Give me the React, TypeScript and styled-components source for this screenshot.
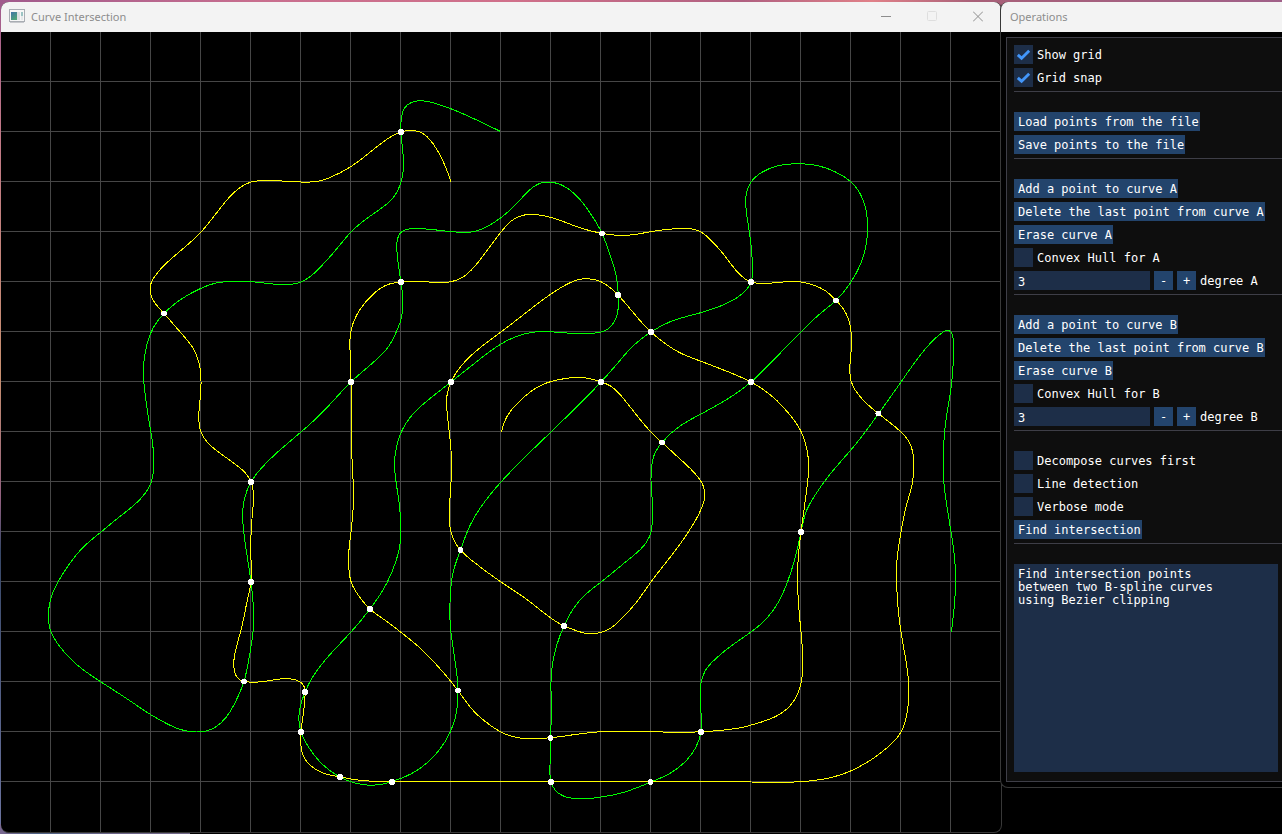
import React, { useState } from "react";
import styled, { createGlobalStyle, css } from "styled-components";

const GlobalStyle = createGlobalStyle`
  * { box-sizing: border-box; }
  html, body { margin: 0; padding: 0; background: #000; }
  body { overflow-x: hidden; }
`;

const colors = {
  titleBar: "#f3f3f3",
  titleText: "#8d8d8d",
  panel: "#0e0e0e",
  line: "#3e3e47",
  outline: "#383838",
  frame: "#1d2e48",
  button: "#23446c",
  accent: "#4296fa",
  grid: "#464646",
  curveA: "#ffff00",
  curveB: "#00ff00",
};

const Desktop = styled.main`
  display: flex;
  align-items: flex-start;
  min-height: 100vh;
  padding: 2px 0 1px 1px;
  background:
    linear-gradient(90deg, #a05a8c 0%, #c86e8e 20%, #d0708a 40%, #b06080 58%, #e08088 68%, #a86078 76%, #a06088 100%) top / 100% 12px no-repeat,
    linear-gradient(90deg, #7a6890, #4d6284 20%, #6c6488 60%, #716888) left bottom / 190px 10px no-repeat,
    linear-gradient(180deg, #a05a8c 0%, #c07888 15%, #c89070 45%, #906080 60%, #384868 66%, #6c74a0 100%) left / 12px 100% no-repeat,
    #000;
`;

const MainWindow = styled.section`
  flex: 1;
  min-width: 0;
  overflow: hidden;
  background: #000;
  border-right: 1px solid ${colors.outline};
  border-bottom: 1px solid ${colors.outline};
  border-radius: 8px;
`;

const ToolWindow = styled.aside`
  position: relative;
  flex: 0 0 282px;
  margin-left: -2px;
  overflow: hidden;
  background: #000;
  border-left: 1px solid ${colors.outline};
  border-bottom: 1px solid ${colors.outline};
  border-radius: 8px 0 0 8px;
`;

const TitleBar = styled.header<{ $plain?: boolean }>`
  display: flex;
  align-items: center;
  height: 30px;
  padding-left: ${(p) => (p.$plain ? "9px" : "8px")};
  background: ${colors.titleBar};
`;

const Title = styled.h1`
  margin: 0;
  flex: 1;
  font: 400 11px/16px "Noto Sans", "Open Sans", sans-serif;
  color: ${colors.titleText};
  white-space: nowrap;
`;

const AppIcon = styled.svg`
  display: block;
  flex: none;
  margin-right: 6px;
`;

const CaptionButton = styled.button`
  display: grid;
  place-items: center;
  width: 46px;
  height: 30px;
  padding: 0;
  border: 0;
  background: none;
  color: ${colors.titleText};
  &:disabled { color: #dedede; }
`;

const Canvas = styled.svg`
  display: block;
  width: 100%;
  height: auto;
`;

const Panel = styled.form`
  display: flex;
  flex-direction: column;
  margin: 5px 0 5px 5px;
  padding: 7px 0 9px 7px;
  background: ${colors.panel};
  border: 1px solid ${colors.line};
  border-right: 0;
`;

const panelText = css`
  font: 400 12px/13px "DejaVu Sans Mono", monospace;
  color: #fff;
`;

const Group = styled.div`
  display: flex;
  flex-direction: column;
  align-items: flex-start;
  gap: 4px;
`;

const Separator = styled.hr`
  width: 100%;
  height: 1px;
  margin: 4px 0 20px;
  border: 0;
  background: ${colors.line};
`;

const Button = styled.button<{ $square?: boolean }>`
  ${panelText}
  width: ${(p) => (p.$square ? "19px" : "auto")};
  height: 19px;
  padding: ${(p) => (p.$square ? "2px 0 0" : "2px 1px 0 4px")};
  border: 0;
  background: ${colors.button};
  white-space: nowrap;
  &:hover { background: ${colors.accent}; }
`;

const CheckLabel = styled.label`
  ${panelText}
  display: flex;
  align-items: center;
  gap: 4px;
`;

const LabelText = styled.span`
  padding-top: 2px;
`;

const CheckFrame = styled.span`
  display: grid;
  width: 19px;
  height: 19px;
  & > * { grid-area: 1 / 1; }
`;

const CheckInput = styled.input`
  appearance: none;
  width: 19px;
  height: 19px;
  margin: 0;
  background: ${colors.frame};
`;

const Row = styled.div`
  display: flex;
  align-items: center;
  gap: 4px;
`;

const DegreeInput = styled.input`
  ${panelText}
  width: 136px;
  height: 19px;
  padding: 2px 4px 0;
  border: 0;
  border-radius: 0;
  background: ${colors.frame};
`;

const DegreeLabel = styled.label`
  ${panelText}
  padding-top: 2px;
`;

const Output = styled.textarea`
  ${panelText}
  display: block;
  height: 208px;
  margin: 0 4px 0 0;
  padding: 4px;
  border: 0;
  resize: none;
  background: ${colors.frame};
`;

type Point = [number, number];

const parse = (s: string): Point[] =>
  s.trim().split(/\s+/).map((p) => p.split(",").map(Number) as Point);

/* Derivatives of the natural C2 cubic spline through v with knot spacing h. */
function derivatives(v: number[], h: number[]): number[] {
  const n = v.length;
  const c: number[] = [];
  const r: number[] = [];
  for (let i = 0; i < n; i++) {
    const a = i === 0 ? 0 : i === n - 1 ? 1 : h[i];
    const b = i === 0 || i === n - 1 ? 2 : 2 * (h[i - 1] + h[i]);
    const up = i === n - 1 ? 0 : i === 0 ? 1 : h[i - 1];
    let rhs: number;
    if (i === 0) rhs = (3 * (v[1] - v[0])) / h[0];
    else if (i === n - 1) rhs = (3 * (v[i] - v[i - 1])) / h[i - 1];
    else rhs = 3 * ((h[i] * (v[i] - v[i - 1])) / h[i - 1] + (h[i - 1] * (v[i + 1] - v[i])) / h[i]);
    const m = b - (i ? a * c[i - 1] : 0);
    c.push(up / m);
    r.push((rhs - (i ? a * r[i - 1] : 0)) / m);
  }
  for (let i = n - 2; i >= 0; i--) r[i] -= c[i] * r[i + 1];
  return r;
}

function spline(points: Point[]): string {
  const h = points.slice(1).map((p, i) => Math.hypot(p[0] - points[i][0], p[1] - points[i][1]));
  const dx = derivatives(points.map((p) => p[0]), h);
  const dy = derivatives(points.map((p) => p[1]), h);
  let d = `M${points[0][0]} ${points[0][1]}`;
  h.forEach((len, i) => {
    const k = len / 3;
    const [x0, y0] = points[i];
    const [x1, y1] = points[i + 1];
    const c = [x0 + dx[i] * k, y0 + dy[i] * k, x1 - dx[i + 1] * k, y1 - dy[i + 1] * k, x1, y1];
    d += `C${c.map((v) => v.toFixed(2)).join(" ")}`;
  });
  return d;
}

const curveA = parse(`
  451,181.5 444.3,164 433.5,144.3 420.3,132.2 410,130.6 401,132 383.5,141.7 351,166.5 330,177.5 318.5,181.2 301,182 282,181
  265,180.7 251,182 239.5,188 225,202.3 201,232 185,247 165,264.5 155,276 151,283.5 150,289 152.5,299 164,313.5 180,331.8
  192.3,347 198.8,362 200.7,374 200.5,395 199,411 199.3,425 201,432 207.5,442.5 222,454.6 237.3,465.8 247.3,475.3 251,482
  253.4,491.7 252.6,511.7 251,535 251,560 251,582 247.4,600 242,626 236.2,648 233.7,664 235.5,674.5 239.4,679.6 244,681.3
  264,681.4 280,679 290,678.8 297,680.4 301.5,683 304,686.5 305,692 303.4,713 301,732 301,746 304.3,758 310.3,765.3 321.8,772.5
  340,777 360,780.3 392,781.6 451,782 551,781.6 651,782 751,782 801,781.7 823,779.2 851,770.8 873,758.5 888.3,746.7
  901.3,731.5 906.7,715 908.6,700 908.6,682 905.8,660 901,632 897.8,605 896.6,582 896.8,562 901,532 906.8,504 912.6,482
  913.7,467 912.7,452 908.6,441 901,432 878.5,413.7 861.8,398.5 855.2,390 851,380.7 849.8,370 851.3,348 851,332 848.4,319
  842.5,307.7 836,300.4 825,290.5 811.8,284.5 798,281.5 786.7,281.7 770,283.2 758,283.2 751,282 740.8,275.5 730.2,263
  720,250 710.2,239.5 701,232 692,229 681.8,228.5 664,229.8 651,231.7 630,235 618,235.3 602,233.4 580,227.8 557,219.3
  545,216 530,214.4 520,216.2 511,221.2 501,232 486,252 475,266 462.5,277.3 451.5,281.6 425,281.7 401,282 386.7,285
  372.8,294.5 361,308 353,323.5 350.4,334 350,350 351,382 351.4,400 351.5,432 352.4,468 353.5,493 353,510 351,532 348.9,551
  349,570 351.2,582.3 357.5,594 370,609 385,620.2 401,632.3 420,648 438.5,667 458,690.6 473.5,710.8 491,725.8 501,732
  511.6,736.2 521.6,738.3 540,738.4 551,737.7 575,734.5 601,731.7 651,731.7 675,732.2 701,731.8 720,730.4 740,727.8
  759,722.8 775,716.8 790,705.8 797.8,693.5 801.2,682 802.7,670 802.5,650 801,632 798.4,602 797.5,577 798.7,552 801,532
  804.4,507 807.7,481 808.7,467 806.7,448.4 801.3,432 790,415 776.8,400.5 751,382 720,368.6 701,361.3 680,352.8 665,343.5
  651,332 636.8,316.8 618,295 610,287.5 600.5,281.5 588.3,278.8 579,279.5 567,284.2 551,294 527,311.9 501,332 480,347.8
  461.8,365.2 451,382 446.9,396 447.2,413 450.7,446 451.5,460 451,482 449.5,507 449.2,517 451,532 455.2,542.5 460.5,550
  473.5,561.8 501,582 530,601.8 564,626 575,630.2 586.6,633.5 597,633.3 610,628.5 620,620.3 635,604 651,582 678.5,546.3
  695,521.3 702.8,505 704.8,496.6 703,485.5 700.4,480.5 685,463.5 662,442.5 651,432 635.3,413.5 620.6,395.2 610.2,385.8
  601,382 590,378.7 575,377.5 560,379.4 545,383.5 531.8,390.8 516.2,404.5 506.8,416.8 501.3,432`);

const curveB = parse(`
  500.5,131.5 475,119.2 451,108.8 431.6,102.4 420,100.7 411,102.7 404.2,108.5 401.5,117 401,132 402.6,150 403.5,163
  403,172 401,182 398,190 391.8,199.3 378.5,210.3 363.5,221 351,232 342,242.5 320,267.5 310,276.7 301,282 290,284.4 275,284.2
  251,281.7 230,281.5 216,283 201,288.3 185,296.8 164,313.5 153.4,327.5 146.8,345 144,361 143.7,380 145.8,399 149.3,423
  152.7,444 153.7,460 153.3,472 151,483 145,493.5 135,504.3 119.5,516.8 101,532 83.5,547 68.5,565.2 57.5,582.8 50.2,601
  48.5,615 51,632 57.5,643.5 73.5,661.8 101,682 130,700.8 151,714.8 165,722.7 180,729.4 196,732 206,731 215,727.4
  226.4,717 235.2,702.5 244,681.3 250.6,649 253.5,627 253.3,605 251,582 246.2,550 243.5,530 242.6,514 244.5,498.5 251,482
  262.6,466.8 276.6,453 301.5,431.6 323.5,411.2 351,382 375,360.8 388.3,346.8 397.3,329.7 401.6,317 402.5,305 402.2,292
  401,282 399,269 396.8,247 397.5,239 400.4,232.8 406,229.6 412,228.7 425,228.9 451,231.6 462,232.3 475,231.4 486.6,226.8
  501,217.6 520,200 534.4,186.2 543,182.5 551,182.2 561,184.8 576.6,196 591.6,215.2 602,233.4 610.2,255.2 616.2,276
  618.3,295 617.5,313 614.2,321.8 607.8,329.2 598.3,332.6 585,333.4 570,333.2 551,331.8 535,332 520,335.2 501,344
  478.5,360.2 451,382 430,398.5 413.5,413.5 401.3,432 396.2,448.3 394.6,465 396.5,485 399.6,507 400.7,524 400.2,543
  395.2,563.3 386.7,583.3 370,609 351,632 325,660.2 313.3,676 305,692 300,708 298.9,716 301,732 308.4,746.8 318.5,760.2
  340,777 351,781.8 361.6,784.4 371,785.2 382,784.2 392,781.6 411.6,773.6 430,760.3 445,741.8 454.3,721.6 457.6,703
  458,690.6 454.5,657 451,632.5 449.8,616 450.2,598 452.8,573.5 460.5,550 470,525.5 483.4,503.5 501,482 523.5,458.5
  551,432 575,408.5 601,382 621.6,358.5 630,349 651,332 670,321.8 701,312.6 720,306.2 736.8,297.8 746.8,289.2 751,282
  752.5,266 751,245 747.5,220 745.8,205 746.5,193 751,182 761.8,172.4 778,165.8 797.3,163.8 820,166.2 835,171.8 851,182
  861.6,196.6 866.2,211 867.7,227 866.3,244 860,265.3 851,282 836,300.4 820,313.8 801,332 775,358.5 751,382 735,394.2
  720,403.5 701,414 680,426 662,442.5 653.4,457 651.6,467 651,480 652.2,500 652.4,518 651,532 645.6,543.5 630,558.4
  601,582 585,595 573.3,608.7 564,626 556.8,645 552.5,664 551,682 551.4,710 550.7,732 550.1,745 550,765 551,782 555.2,790
  562.6,795.7 572,798.2 590,798.5 601,797 620,793.4 651,782 670,773.4 686.6,760.2 695.2,748.5 701,732 700.8,710 701,683
  705.2,670.8 714,660.3 730,646.8 751,632 766.6,618.5 778.5,602 787.3,582.6 795.2,557.5 801,532 806.6,510.5 815,495.3
  824,482 843.5,458.4 853.5,446.8 865.2,432 878.5,413.7 901,382 920,355.5 935,338.6 942.3,332.6 948,330.5 951.4,332.5
  953,338 953.7,350 953.2,364 951,388 947.4,411 944.6,431.6 943.6,450 943.8,481 946.5,503.5 951,532 954.2,554 955.6,580
  954.5,604 952.6,621.6 951.5,632`);

const crossings = parse(`
  401,132 164,313.5 401,282 351,382 451,382 602,233.5 618,295 651,332 601,382 751,282 836,300.5 751,382 662,442.5
  878.5,413.5 251,482 251,582 244,681.5 305,692 301,732 340,777 392,782 370,609 460.5,550 564,626 458,690.5 550.5,738
  551,782 650.5,782 701,732 801,532`);

const columns = Array.from({ length: 19 }, (_, i) => 50.5 + i * 50);
const rows = Array.from({ length: 15 }, (_, i) => 81.5 + i * 50);

function CurveCanvas({ showGrid }: { showGrid: boolean }) {
  return (
    <Canvas viewBox="1 32 1000 800" role="img" aria-label="Curves" shapeRendering="crispEdges" fill="none">
      {showGrid && (
        <g stroke={colors.grid}>
          {columns.map((x) => <line key={x} x1={x} x2={x} y1="32" y2="832" />)}
          {rows.map((y) => <line key={y} x1="1" x2="1001" y1={y} y2={y} />)}
        </g>
      )}
      <path d={spline(curveB)} stroke={colors.curveB} />
      <path d={spline(curveA)} stroke={colors.curveA} />
      <g fill="#fff">
        {crossings.map(([x, y]) => <circle key={`${x},${y}`} cx={x} cy={y} r="3" />)}
      </g>
    </Canvas>
  );
}

function Check({ label, checked = false, onChange }: {
  label: string;
  checked?: boolean;
  onChange?: (value: boolean) => void;
}) {
  const [own, setOwn] = useState(checked);
  const value = onChange ? checked : own;
  return (
    <CheckLabel>
      <CheckFrame>
        <CheckInput
          type="checkbox"
          checked={value}
          onChange={(e) => (onChange ?? setOwn)(e.target.checked)}
        />
        {value && (
          <svg width="19" height="19" fill="none" stroke={colors.accent} strokeWidth="2.9" pointerEvents="none">
            <path d="M3.8 9.8L7.6 13.2L15.2 5.8" />
          </svg>
        )}
      </CheckFrame>
      <LabelText>{label}</LabelText>
    </CheckLabel>
  );
}

function CurveGroup({ name }: { name: string }) {
  const [degree, setDegree] = useState(3);
  const id = `degree-${name}`;
  return (
    <Group>
      <Button type="button">Add a point to curve {name}</Button>
      <Button type="button">Delete the last point from curve {name}</Button>
      <Button type="button">Erase curve {name}</Button>
      <Check label={`Convex Hull for ${name}`} />
      <Row>
        <DegreeInput id={id} value={degree} onChange={(e) => setDegree(Number(e.target.value) || 0)} />
        <Button type="button" $square onClick={() => setDegree(degree - 1)}>-</Button>
        <Button type="button" $square onClick={() => setDegree(degree + 1)}>+</Button>
        <DegreeLabel htmlFor={id}>degree {name}</DegreeLabel>
      </Row>
    </Group>
  );
}

export default function App() {
  const [showGrid, setShowGrid] = useState(true);
  return (
    <>
      <GlobalStyle />
      <Desktop>
        <MainWindow>
          <TitleBar>
            <AppIcon width="16" height="16" viewBox="0 0 16 16">
              <defs>
                <linearGradient id="pane" x1="0" y1="0" x2="0.6" y2="1">
                  <stop offset="0" stopColor="#3f74a8" />
                  <stop offset="1" stopColor="#4fa478" />
                </linearGradient>
              </defs>
              <rect x="0.5" y="0.5" width="15" height="12" fill="#f6f6f6" stroke="#a9adb3" />
              <path d="M1 13.5H15" stroke="#c6c8cc" />
              <rect x="2" y="3" width="6" height="8" fill="url(#pane)" />
              <rect x="8" y="3" width="3" height="8" fill="#dcdfe2" />
              <rect x="12" y="3" width="2" height="4" fill="#9cc4c4" />
              <rect x="12" y="7" width="2" height="4" fill="#e6e8ea" />
            </AppIcon>
            <Title>Curve Intersection</Title>
            <CaptionButton aria-label="Minimize">
              <svg width="10" height="12" stroke="currentColor"><path d="M0 5.5H10" /></svg>
            </CaptionButton>
            <CaptionButton aria-label="Maximize" disabled>
              <svg width="10" height="12" fill="none" stroke="currentColor"><rect x="0.5" y="0.5" width="9" height="9" rx="1" /></svg>
            </CaptionButton>
            <CaptionButton aria-label="Close">
              <svg width="10" height="12" stroke="currentColor"><path d="M0 0.5L10 10.5M10 0.5L0 10.5" /></svg>
            </CaptionButton>
          </TitleBar>
          <CurveCanvas showGrid={showGrid} />
        </MainWindow>
        <ToolWindow>
          <TitleBar $plain>
            <Title as="h2">Operations</Title>
          </TitleBar>
          <Panel onSubmit={(e) => e.preventDefault()}>
            <Group>
              <Check label="Show grid" checked={showGrid} onChange={setShowGrid} />
              <Check label="Grid snap" checked />
            </Group>
            <Separator />
            <Group>
              <Button type="button">Load points from the file</Button>
              <Button type="button">Save points to the file</Button>
            </Group>
            <Separator />
            <CurveGroup name="A" />
            <Separator />
            <CurveGroup name="B" />
            <Separator />
            <Group>
              <Check label="Decompose curves first" />
              <Check label="Line detection" />
              <Check label="Verbose mode" />
              <Button type="submit">Find intersection</Button>
            </Group>
            <Separator />
            <Output
              readOnly
              aria-label="Output"
              value={"Find intersection points\nbetween two B-spline curves\nusing Bezier clipping"}
            />
          </Panel>
        </ToolWindow>
      </Desktop>
    </>
  );
}
